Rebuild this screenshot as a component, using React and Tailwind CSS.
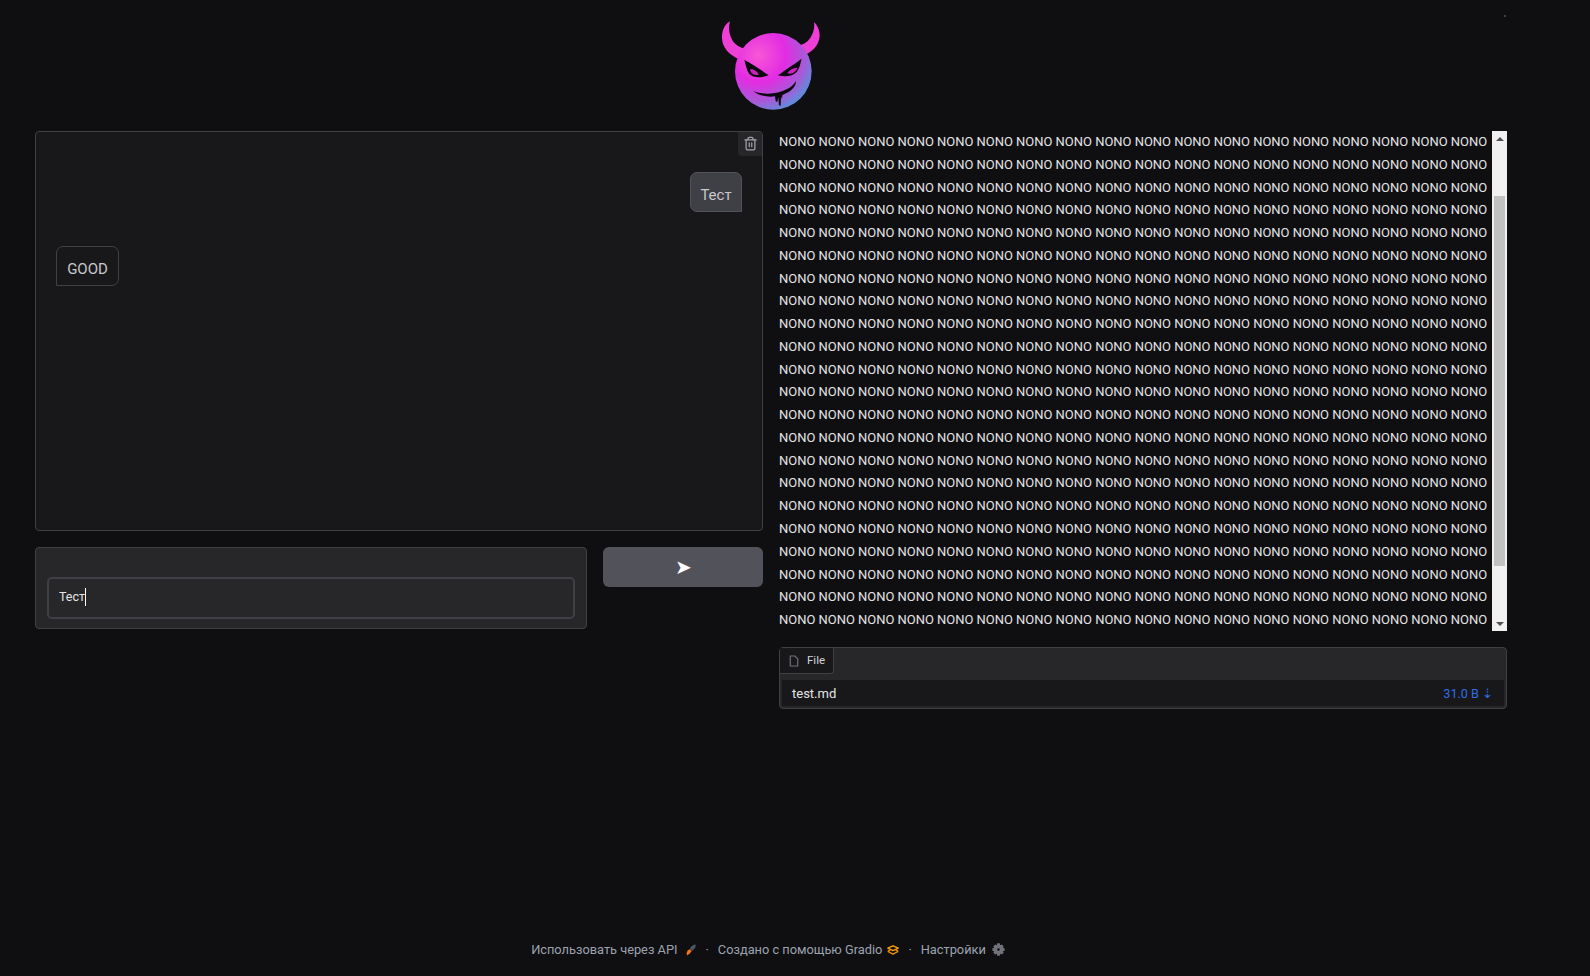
import { Trash2 } from "lucide-react";

const font = { fontFamily: "Roboto, sans-serif" };
const nonoLine = Array(18).fill("NONO").join(" ");
const lines = Array.from({ length: 22 }, (_, i) => i);

function DevilLogo() {
  return (
    <svg viewBox="0 0 480 375" className="w-[160px] h-[125px]">
      <defs>
        <radialGradient id="face" gradientUnits="userSpaceOnUse" cx="205" cy="165" r="195">
          <stop offset="0" stopColor="#f757d6" />
          <stop offset="0.42" stopColor="#e32ce2" />
          <stop offset="0.72" stopColor="#a85ad8" />
          <stop offset="1" stopColor="#3fa2dc" />
        </radialGradient>
      </defs>
      <path d="M120 64C98 76 90 108 100 134C110 158 132 172 158 182L172 146C148 144 130 132 122 110C116 94 116 78 120 64Z" fill="#ee3fd6" />
      <path d="M372 66C392 86 394 114 380 136C370 152 352 164 336 168L322 138C342 134 356 124 364 108C372 94 374 80 372 66Z" fill="#ee3fd6" />
      <circle cx="250" cy="214" r="115" fill="url(#face)" />
      <path d="M163 180C180 188 214 210 236 226C214 234 190 234 178 222C170 212 168 196 163 180Z" fill="#0d0710" />
      <path d="M335 176C320 188 288 208 264 226C286 232 310 228 320 216C328 206 331 192 335 176Z" fill="#0d0710" />
      <path d="M180 208C190 206 202 214 206 224C192 228 182 220 180 208Z" fill="#d01fc0" />
      <path d="M322 204C310 202 298 210 292 220C306 224 318 216 322 204Z" fill="#d01fc0" />
      <path d="M190 274C226 286 264 282 290 268C302 262 312 254 318 243C318 258 306 272 288 280L277 285L276 298L273 289L272 317L267 316L265 291L262 306L257 304L255 289C234 292 208 288 190 274Z" fill="#0d0710" />
    </svg>
  );
}

function RocketIcon() {
  return (
    <svg viewBox="0 0 10 12" className="w-[10px] h-[12px]">
      <path d="M4.5 3.5C5.5 1.8 7.6 .4 9.6 .4C10 2.6 8.8 4.8 7 6.2L5.6 6.8L3.8 5Z" fill="#4b5563" />
      <path d="M3.6 5.2L5.6 7L3.8 9.6L1 11.6L.6 9L1.6 6.6Z" fill="#f97316" />
    </svg>
  );
}

function GradioIcon() {
  return (
    <svg viewBox="0 0 12 10" className="w-[12px] h-[10px]" fill="none" stroke="#f59e0b" strokeWidth="1.4" strokeLinejoin="round">
      <path d="M6 .8L11.2 3.2L6 5.6L.8 3.2Z" />
      <path d="M.8 6.4L6 9.2L11.2 6.4" stroke="#ea8a0b" />
      <path d="M3.4 4.6L.8 6.4M8.6 4.6L11.2 6.4" stroke="#ea8a0b" />
    </svg>
  );
}

function GearIcon() {
  return (
    <svg viewBox="0 0 14 14" className="w-[13px] h-[13px]">
      <path
        fillRule="evenodd"
        d="M5.6 .4H8.4L8.8 2.4L10.6 1.6L12.6 3.7L11.7 5.3L13.6 5.7V8.4L11.7 8.8L12.6 10.4L10.6 12.4L8.8 11.6L8.4 13.6H5.6L5.2 11.6L3.4 12.4L1.4 10.4L2.3 8.8L.4 8.4V5.7L2.3 5.3L1.4 3.7L3.4 1.6L5.2 2.4ZM7 5.6A1.4 1.4 0 1 0 7 8.4A1.4 1.4 0 1 0 7 5.6Z"
        fill="#71717a"
      />
    </svg>
  );
}

export default function App() {
  return (
    <div className="min-h-[976px] bg-[#0f0f11] text-[#e4e4e7] relative" style={font}>
      <div className="absolute left-[1504px] top-[15px] w-[2px] h-[2px] bg-[#3f3f46]" />

      <header className="h-[131px] w-[1472px] ml-[35px] pr-[2px] flex justify-center items-start">
        <DevilLogo />
      </header>

      <main className="w-[1472px] ml-[35px] flex gap-4 items-start">
        <section className="w-[728px] flex flex-col gap-4">
          <div className="h-[400px] relative bg-[#18181b] border border-[#3f3f46] rounded-[4px]">
            <button className="absolute top-0 right-0 w-[24px] h-[24px] pl-[1px] pb-[2px] flex items-center justify-center bg-[#27272a] rounded-bl-[4px] rounded-tr-[4px] text-[#a1a1aa]">
              <Trash2 size={15} />
            </button>
            <div className="absolute top-[40px] right-[20px] w-[52px] h-[40px] pt-[6px] flex items-center justify-center bg-[#3f3f46] border border-[#52525b] rounded-[7px] rounded-br-none text-[15px] text-[#c8c8cc]">
              Тест
            </div>
            <div className="absolute top-[114px] left-[20px] w-[63px] h-[40px] pt-[6px] flex items-center justify-center bg-[#18181b] border border-[#3f3f46] rounded-[7px] rounded-bl-none text-[15px] text-[#c8c8cc]">
              GOOD
            </div>
          </div>

          <div className="flex gap-4 items-start">
            <div className="w-[552px] h-[82px] pt-[29px] px-[11px] bg-[#27272a] border border-[#3f3f46] rounded-[4px]">
              <div className="h-[42px] px-[10px] pb-[2px] flex items-center border-2 border-[#3f3f46] rounded-[5px] text-[12.5px] text-[#e4e4e7]">
                <span>Тест</span>
                <span className="w-px h-[18px] bg-white" />
              </div>
            </div>
            <button className="flex-1 h-[40px] flex items-center justify-center bg-[#52525b] rounded-[6px] text-white text-[20px] leading-none">
              ➤
            </button>
          </div>
        </section>

        <section className="w-[728px] flex flex-col gap-4">
          <div className="h-[500px] flex">
            <div className="flex-1 overflow-hidden text-[12.96px] leading-[22.76px] whitespace-nowrap">
              {lines.map((i) => (
                <div key={i}>{nonoLine}</div>
              ))}
            </div>
            <div className="w-[15px] bg-[#f1f1f1] flex flex-col items-center">
              <div className="h-[15px] flex items-center justify-center">
                <div className="w-0 h-0 border-x-[4px] border-x-transparent border-b-[4px] border-b-[#505050]" />
              </div>
              <div className="w-[11px] h-[370px] mt-[50px] bg-[#c1c1c1]" />
              <div className="mt-auto h-[15px] flex items-center justify-center">
                <div className="w-0 h-0 border-x-[4px] border-x-transparent border-t-[4px] border-t-[#505050]" />
              </div>
            </div>
          </div>

          <div className="h-[62px] bg-[#27272a] border border-[#3f3f46] rounded-[4px] flex flex-col">
            <div className="h-[32px] flex items-start shrink-0">
              <div className="h-[26px] w-[54px] pl-[9px] flex items-center gap-[8px] bg-[#18181b] border-r border-b border-[#3f3f46] rounded-br-[4px] text-[11.5px] text-[#d4d4d8]">
                <svg viewBox="0 0 12 14" className="w-[10px] h-[12px]" fill="none" stroke="#71717a" strokeWidth="1.4" strokeLinejoin="round">
                  <path d="M1.5 1H7L10.5 4.5V13H1.5Z" />
                </svg>
                File
              </div>
            </div>
            <div className="flex-1 mx-[2px] mb-[2px] pl-[10px] pr-[11px] pt-[1px] flex items-center justify-between bg-[#18181b] text-[13px]">
              <span>test.md</span>
              <span className="text-[#2f6fe4] text-[12.6px] pt-[1px]">31.0 B ⇣</span>
            </div>
          </div>
        </section>
      </main>

      <footer className="absolute left-0 top-[940px] w-[1536px] flex justify-center items-center text-[12.8px] text-[#9ca3af]">
        <span>Использовать через API</span>
        <span className="ml-[9px]"><RocketIcon /></span>
        <span className="mx-[9px]">·</span>
        <span>Создано с помощью Gradio</span>
        <span className="ml-[5px]"><GradioIcon /></span>
        <span className="mx-[9px]">·</span>
        <span>Настройки</span>
        <span className="ml-[6px]"><GearIcon /></span>
      </footer>
    </div>
  );
}
